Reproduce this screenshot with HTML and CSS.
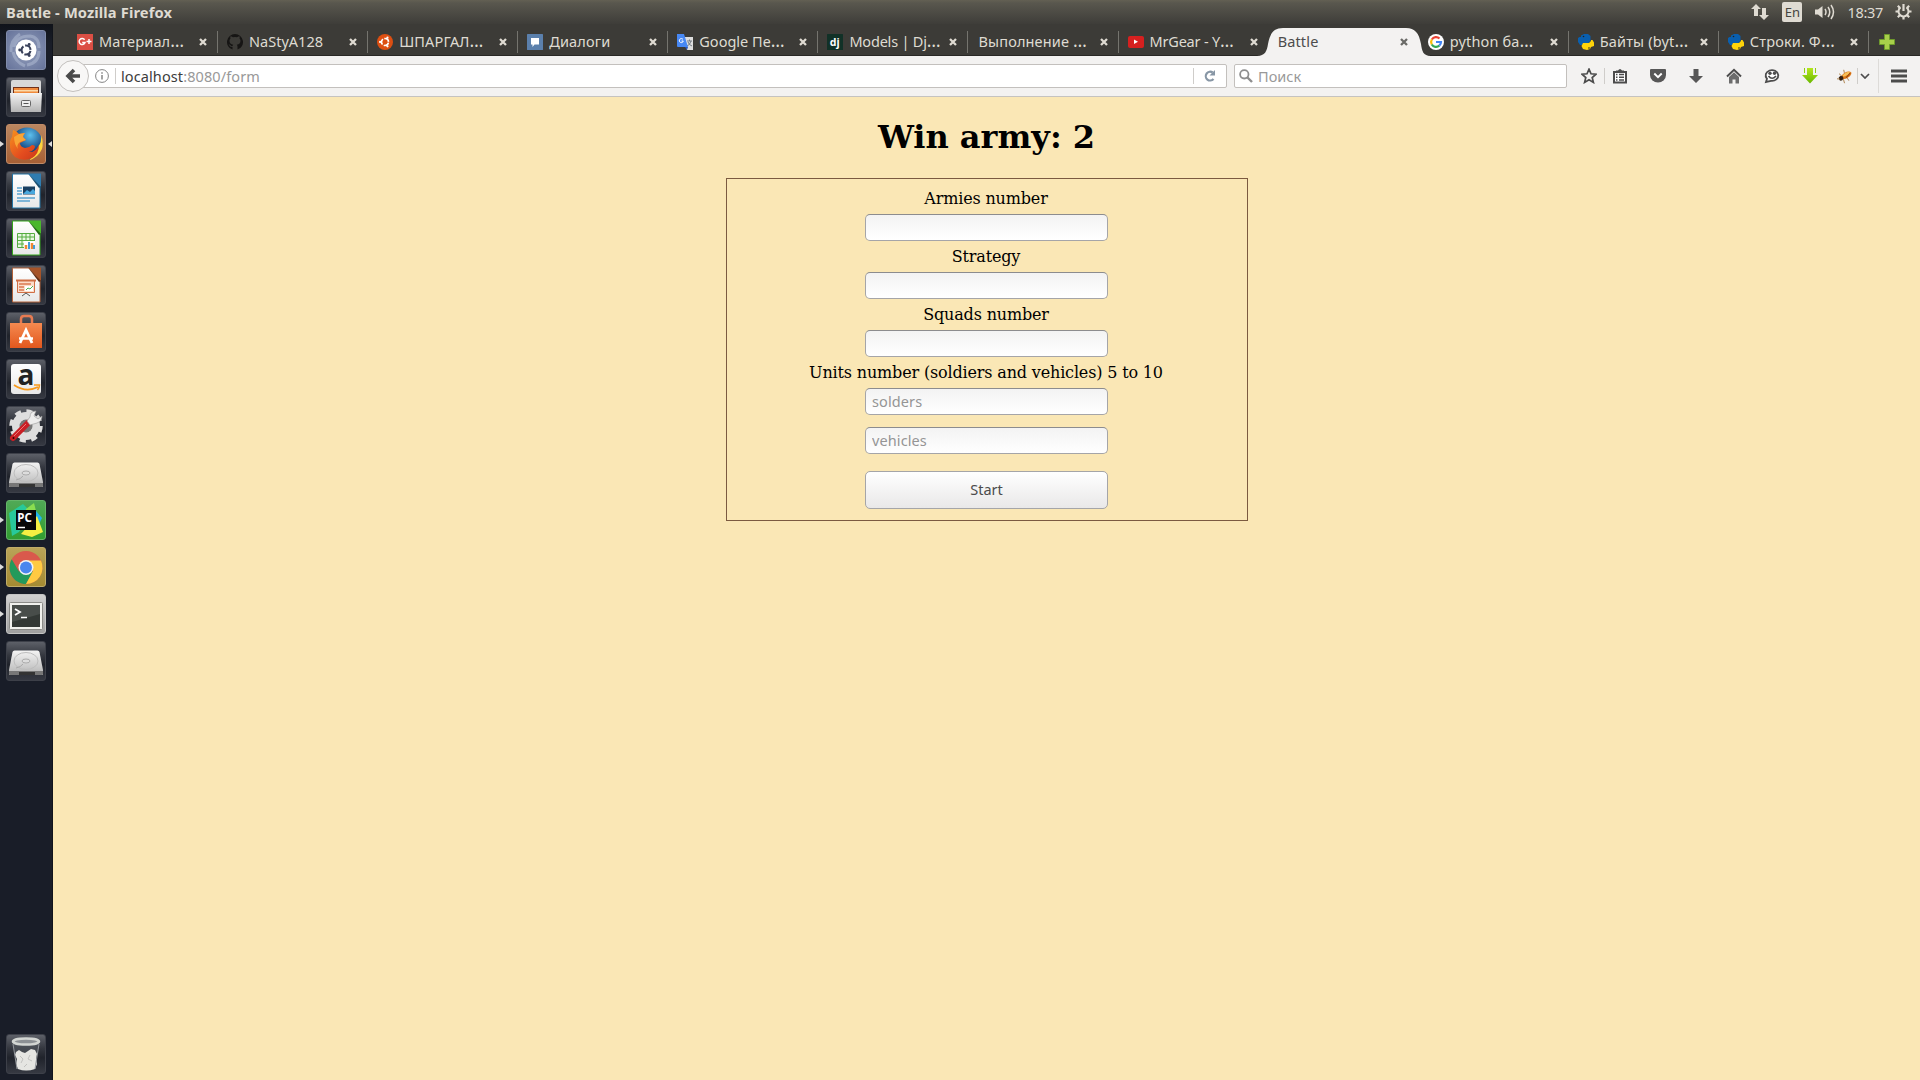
FILE: index.html
```html
<!DOCTYPE html>
<html lang="ru">
<head>
<meta charset="utf-8">
<title>Battle</title>
<link rel="stylesheet" href="styles.css">
</head>
<body>
<svg class="defs" width="0" height="0">
  <defs>
    <linearGradient id="metal" x2="0" y2="1"><stop stop-color="#f4f4f4"/><stop offset="1" stop-color="#b4b4b4"/></linearGradient>
    <linearGradient id="paper" x2="0" y2="1"><stop stop-color="#fff"/><stop offset="1" stop-color="#e8e8e8"/></linearGradient>
    <linearGradient id="bag" x2="0" y2="1"><stop stop-color="#f58a50"/><stop offset="1" stop-color="#e2571d"/></linearGradient>
    <radialGradient id="globe" cx=".6" cy=".25"><stop stop-color="#5cc0ee"/><stop offset="1" stop-color="#14447f"/></radialGradient>
    <linearGradient id="fox" x2="1" y2="1"><stop stop-color="#f7931e"/><stop offset=".6" stop-color="#e44d1f"/><stop offset="1" stop-color="#c93818"/></linearGradient>
    <linearGradient id="green" x2="0" y2="1"><stop stop-color="#b4e61e"/><stop offset="1" stop-color="#69b800"/></linearGradient>
    <symbol id="close" viewBox="0 0 8 8"><path d="M1 1l6 6M7 1L1 7" stroke="currentColor" stroke-width="2.3"/></symbol>
    <symbol id="cof" viewBox="0 0 16 16">
      <circle cx="8" cy="8" r="4" fill="none" stroke="currentColor" stroke-width="1.9" stroke-dasharray="6.8 1.578" stroke-dashoffset="-.8"/>
      <circle cx="2.4" cy="8" r="1.3" fill="currentColor"/><circle cx="10.8" cy="3.1" r="1.3" fill="currentColor"/><circle cx="10.8" cy="12.9" r="1.3" fill="currentColor"/>
    </symbol>
    <symbol id="python" viewBox="0 0 16 16">
      <path d="M3 1.500L6 0h4l2.500 2v5L10.500 9H6L4 11H2L0 8V4l1.500-1H3z" fill="#0a5fae"/>
      <path d="M13 6h1.500L16 8.500V12l-3 1-1 2-3 1-4-1-1.500-3L5 9h6l2-2z" fill="#ffd40a"/>
      <circle cx="5.500" cy="2.500" r=".8" fill="#222"/><circle cx="11" cy="14" r=".8" fill="#222"/>
    </symbol>
    <symbol id="disk" viewBox="0 0 40 40">
      <path d="M8.500 9.500h23q1.500 0 2 1.500L37 29v5H3v-5l3.500-18q.500-1.500 2-1.500z" fill="url(#metal)"/>
      <path d="M3 30h34v3q0 1-1 1H4q-1 0-1-1z" fill="#777"/><path d="M13 31h16v3H13z" fill="#333"/>
      <ellipse cx="20" cy="20" rx="12" ry="8.500" fill="none" stroke="#bdbdbd"/>
      <ellipse cx="20" cy="20" rx="4" ry="2" fill="#ddd" stroke="#aaa"/>
      <path d="M10 27q5-1 7-4" stroke="#aaa" fill="none"/>
    </symbol>
  </defs>
</svg>

<header class="panel">
  <span class="panel-title">Battle - Mozilla Firefox</span>
  <div class="indicators">
    <svg width="18" height="18" viewBox="0 0 18 18"><path d="M5 1L0 6h3v7h4V6h3zM13 17l5-5h-3V5h-4v7H8z" fill="#dfdbd2"/></svg>
    <span class="lang">En</span>
    <svg width="21" height="16" viewBox="0 0 21 16"><path d="M1 5.500h3L8.500 2v12L4 10.500H1z" fill="#dfdbd2"/><path d="M11 5q2 3 0 6M14 3q3.500 5 0 10M17 1q5 7 0 14" fill="none" stroke="#dfdbd2" stroke-width="1.500"/></svg>
    <span class="clock">18:37</span>
    <svg width="17" height="17" viewBox="0 0 17 17"><path d="M5.500 4.400a5 5 0 1 0 6 0" fill="none" stroke="#dfdbd2" stroke-width="2"/><path d="M8.500 1v7M.5 8.500h3M13.500 8.500h3M8.500 13.500v3M2.800 2.800L5 5M14.200 2.800L12 5M2.800 14.200L5 12M14.200 14.200L12 12" stroke="#dfdbd2" stroke-width="2.200"/></svg>
  </div>
</header>

<div class="desktop">
  <nav class="launcher">
    <div class="tile tile-dash"><svg viewBox="0 0 40 40"><g fill="none" stroke="#c4cde2" stroke-opacity=".4" stroke-width="3"><path d="M8 17Q10 6 24 6q9 1 9 12M33 21q0 12-12 14M7 22q2 10 12 14M14 4Q4 10 5 22"/></g><circle cx="20" cy="20" r="10.500" fill="#fff"/><svg x="11" y="11" width="18" height="18" color="#39415a"><use href="#cof"/></svg></svg></div>
    <div class="tile"><svg viewBox="0 0 40 40"><path d="M5 5q0-2 2-2h26q2 0 2 2v11H5z" fill="#d8d8d8"/><path d="M7 10h26v6H7z" fill="#713018"/><path d="M8 11h24v5H8z" fill="#f08a3c"/><path d="M8 13h24v1.500H8z" fill="#fbd9a8"/><path d="M4 16h32l-1 19H5z" fill="url(#metal)"/><rect x="15.500" y="23.500" width="9" height="6" rx="1" fill="#eee" stroke="#666"/><path d="M17.500 26.500h5" stroke="#555"/></svg></div>
    <div class="tile tile-firefox"><i class="pip"></i><i class="pip pip-right"></i><svg viewBox="0 0 40 40"><circle cx="21" cy="19" r="15.500" fill="url(#globe)"/><path d="M35 11q3 7 1 14-4 9-13 11 9-6 9-13 4-5 3-12z" fill="#ffd23c"/><path d="M7 6q4 1 6 4l6-1q-2 2-2 4l3 3-6 3q0 4 5 5 4 0 7-3 3 0 3 2-1 4-6 5 6 1 10-7 0 9-7 13-9 4-17-1Q3 28 4 18q0-3 2-5z" fill="url(#fox)"/><path d="M8 13l5-3 6-1q-2 2-2 4l3 3-6 2q-4 3-2 7-4-5-4-12z" fill="#f9a534"/></svg></div>
    <div class="tile"><svg viewBox="0 0 40 40"><path d="M6.500 3H23l11 12v22H6.500z" fill="url(#paper)" stroke="#2474a4"/><path d="M22 2.500h13V16z" fill="#2f7cb0"/><path d="M22 2.500L35 16l-2 1z" fill="#174d70"/><path d="M17 15.500h12v8H17z" fill="#193f61"/><path d="M17 23l4-4 3 2 3-3 2 2v3z" fill="#49a8de"/><path d="M11 17h5M11 20h5M11 23h5M11 27h18M11 30h13" stroke="#5aa2d0" stroke-width="1.600"/></svg></div>
    <div class="tile"><svg viewBox="0 0 40 40"><path d="M6.500 3H23l11 12v22H6.500z" fill="url(#paper)" stroke="#35a41c"/><path d="M22 2.500h13V16z" fill="#49b72c"/><path d="M22 2.500L35 16l-2 1z" fill="#206a12"/><path d="M11.500 15.500h17v14h-17zM11.500 19h17M11.500 22.500h17M11.500 26h17M16 15.500v14M20 15.500v14M24 15.500v14" fill="#e8f8e2" stroke="#55ac40"/><path d="M18 23h11v8H18z" fill="#fff"/><path d="M20 27v4M26 25v6" stroke="#f08832" stroke-width="2.500"/><path d="M23 24v7M28 27v4" stroke="#459bd8" stroke-width="2"/></svg></div>
    <div class="tile"><svg viewBox="0 0 40 40"><path d="M6.500 3H23l11 12v22H6.500z" fill="url(#paper)" stroke="#b2623a"/><path d="M22 2.500h13V16z" fill="#a65429"/><path d="M22 2.500L35 16l-2 1z" fill="#612c12"/><path d="M11.500 15.500h17v12h-17z" fill="#fbdcc9" stroke="#d06f45"/><path d="M10 15.500h20" stroke="#d06f45" stroke-width="2"/><path d="M13 19h12M13 22h5M13 25h5" stroke="#dc7850" stroke-width="1.500"/><path d="M19 21h8v5h-8z" fill="#fff"/><path d="M20 25l2-2 2 1 3-3" stroke="#4caf50" fill="none"/><path d="M16 31l4-3 4 3" stroke="#555" fill="none"/></svg></div>
    <div class="tile"><svg viewBox="0 0 40 40"><path d="M15 13V7q0-3 3-3h5q3 0 3 3v6" fill="none" stroke="#e77b52" stroke-width="2.500"/><path d="M4 11h32v25H4z" fill="url(#bag)"/><path d="M14 31l6-13 6 13" fill="none" stroke="#fff" stroke-width="2.800"/><path d="M13 26.500h14" stroke="#fff" stroke-width="2.500"/></svg></div>
    <div class="tile"><svg viewBox="0 0 40 40"><rect x="5" y="5" width="30" height="30" rx="3" fill="url(#paper)"/><text x="20" y="25.500" class="amazon-a">a</text><path d="M8 26q12 8 24 2" fill="none" stroke="#f79a1c" stroke-width="1.800"/><path d="M28 26h5.500q0 3-2 5" fill="none" stroke="#f79a1c" stroke-width="1.500"/></svg></div>
    <div class="tile"><svg viewBox="0 0 40 40"><circle cx="20" cy="20" r="10" fill="none" stroke="#dedede" stroke-width="8"/><circle cx="20" cy="20" r="14.500" fill="none" stroke="#dedede" stroke-width="4.500" stroke-dasharray="6 5.388"/><circle cx="20" cy="20" r="6.500" fill="#777"/><path d="M7 32L22 17" stroke="#c91f25" stroke-width="6" stroke-linecap="round"/><path d="M8 30L20 18" stroke="#ef7575" stroke-width="1"/><path d="M21 15l3 4 7-2q5-2 5-7l-4 3-4-3 2-5q-6 0-6 6z" fill="#ededed" stroke="#999" stroke-width=".6"/><circle cx="7.500" cy="32" r="1" fill="#300"/></svg></div>
    <div class="tile"><svg viewBox="0 0 40 40"><use href="#disk"/></svg></div>
    <div class="tile tile-pycharm"><i class="pip"></i><svg viewBox="0 0 40 40"><path d="M3 13L17 4l8 8-12 20-7 4z" fill="#28c99a"/><path d="M20 9l8-6 3 12-15 9z" fill="#8bde50"/><path d="M30 11l6 7-4 8-6-9z" fill="#22b5ec"/><path d="M15 34l16-18 6 16-11 5z" fill="#f5ef42"/><rect x="10" y="10" width="20" height="20" fill="#080808"/><path d="M12 27.500h7" stroke="#fff" stroke-width="1.500"/><text x="11.300" y="21.500" class="pycharm-text">PC</text></svg></div>
    <div class="tile tile-chrome"><i class="pip"></i><svg viewBox="0 0 40 40"><circle cx="20" cy="20.500" r="16.500" fill="#d9594c"/><path d="M5.700 12.300A16.500 16.500 0 0 0 20 37l7-12.500L13 24.500z" fill="#239a5b"/><path d="M20 37A16.500 16.500 0 0 0 35 13.500H20l7 10.500z" fill="#ffca42"/><circle cx="20" cy="20.500" r="7.500" fill="#f4f4f4"/><circle cx="20" cy="20.500" r="6" fill="#4a86ee"/></svg></div>
    <div class="tile tile-terminal"><i class="pip"></i><svg viewBox="0 0 40 40"><rect x="3.500" y="8.500" width="33" height="27" rx="1" fill="#f0f0ed" stroke="#8b8b88"/><rect x="6" y="11" width="28" height="22" fill="#333835"/><path d="M6 11h28v9L6 28z" fill="#484d4a"/><path d="M9 15l5 3-5 3" fill="none" stroke="#fff" stroke-width="1.800"/><path d="M15 23.500h6" stroke="#fff" stroke-width="1.500"/></svg></div>
    <div class="tile"><svg viewBox="0 0 40 40"><use href="#disk"/></svg></div>
    <div class="tile tile-trash"><svg viewBox="0 0 40 40"><path d="M7 9h26l-4 26q-9 3-18 0z" fill="#555a60" opacity=".6"/><path d="M10 18l3-2 3 2 3 1 3-2 3-2 4 1 2 4-1 5 1 5-2 5q-9 3-17 0l-2-5 1-5-2-4z" fill="#e5e5e2"/><path d="M14 22l3 3-2 4M24 21l-2 4 4 2M18 33l3-3" stroke="#b8b8b6" stroke-width=".8" fill="none"/><ellipse cx="20" cy="7.500" rx="13" ry="3" fill="#8c9094" stroke="#d2d5d2" stroke-width="2.500"/><path d="M7 10l4 25M33 10l-4 25" stroke="#92969b"/></svg></div>
  </nav>

  <div class="browser">
    <div class="tabs">
      <div class="tab"><svg class="fav" viewBox="0 0 16 16"><path d="M0 0h16v16H0z" fill="#db4f44"/><path d="M7.600 5.800A3 3 0 1 0 8 8.500H5.200M9.500 7.500h5M12 5v5" fill="none" stroke="#fff" stroke-width="1.500"/></svg><span class="label">Материал<span class="dots">…</span></span><svg class="close"><use href="#close"/></svg></div>
      <div class="tab"><svg class="fav" viewBox="0 0 16 16"><path d="M8 0a8 8 0 0 0-2.500 15.600V13q-2 .4-3-1.500l-1-1q1.500-.3 2.200 1 .8 1 1.900.5.100-.8.600-1.200Q2.500 10.300 2.500 6.800q0-1.300 1-2.200-.4-1 0-2.300 1 0 2.500 1 2-.6 4 0 1.500-1 2.500-1 .4 1.300 0 2.300 1 .9 1 2.200 0 3.500-3.700 4 .7.600.7 1.800v3A8 8 0 0 0 8 0z" fill="#161514"/></svg><span class="label label-tight">NaStyA128</span><svg class="close"><use href="#close"/></svg></div>
      <div class="tab"><svg class="fav" viewBox="0 0 16 16"><circle cx="8" cy="8" r="8" fill="#dd4f12"/><svg x="1" y="1" width="14" height="14" color="#fff"><use href="#cof"/></svg></svg><span class="label">ШПАРГАЛ<span class="dots">…</span></span><svg class="close"><use href="#close"/></svg></div>
      <div class="tab"><svg class="fav" viewBox="0 0 16 16"><rect width="16" height="16" rx=".5" fill="#5b80ac"/><path d="M4 4h8v6.500H7.500L5.500 13v-2.500H4z" fill="#fff"/></svg><span class="label">Диалоги</span><svg class="close"><use href="#close"/></svg></div>
      <div class="tab"><svg class="fav" viewBox="0 0 16 16"><path d="M7 3h9v13H10z" fill="#dedede"/><path d="M10 7h5M12.500 5.500V7M14 7q-1 4-4 5M11 8q1 3 4 4" fill="none" stroke="#737b83"/><path d="M0 0h7l4 13H1q-1 0-1-1z" fill="#4788f4"/><path d="M8 13h3l-1 3z" fill="#2856be"/><path d="M6 5.500A2 2 0 1 0 6.300 7H4.500" fill="none" stroke="#fff"/></svg><span class="label label-tight">Google Пе<span class="dots">…</span></span><svg class="close"><use href="#close"/></svg></div>
      <div class="tab"><svg class="fav" viewBox="0 0 16 16"><rect width="16" height="16" rx=".5" fill="#113127"/><text x="2.800" y="11.800" class="dj">dj</text></svg><span class="label label-tighter">Models | Dj<span class="dots">…</span></span><svg class="close"><use href="#close"/></svg></div>
      <div class="tab"><span class="label">Выполнение <span class="dots">…</span></span><svg class="close"><use href="#close"/></svg></div>
      <div class="tab tab-before"><svg class="fav" viewBox="0 0 16 16"><rect y="2" width="16" height="12" rx="2" fill="#d6201f"/><path d="M6 5.500v4.500l4-2.200z" fill="#fff"/></svg><span class="label label-tighter">MrGear - Y<span class="dots">…</span></span><svg class="close"><use href="#close"/></svg></div>
      <div class="tab tab-active"><svg class="tab-shape" viewBox="0 0 174 29"><path d="M0 29v-1c8 0 10-5 11-12C13 5 17 0 26 0h123c9 0 13 5 15 16 1 7 2 12 10 12v1z" fill="#f3f2f1"/></svg><span class="label">Battle</span><svg class="close"><use href="#close"/></svg></div>
      <div class="tab"><svg class="fav" viewBox="0 0 16 16"><circle cx="8" cy="8" r="8" fill="#fff"/><g fill="none" stroke-width="2.200"><path d="M3.800 5.500A5 5 0 0 1 11.500 4.500" stroke="#ea4335"/><path d="M3.800 5.500a5 5 0 0 0 0 5" stroke="#fbbc05"/><path d="M3.800 10.500a5 5 0 0 0 7.500 1.200" stroke="#34a853"/><path d="M8 8h5a5 5 0 0 1-1.700 3.700" stroke="#4285f4"/></g></svg><span class="label">python ба<span class="dots">…</span></span><svg class="close"><use href="#close"/></svg></div>
      <div class="tab"><svg class="fav"><use href="#python"/></svg><span class="label">Байты (byt<span class="dots">…</span></span><svg class="close"><use href="#close"/></svg></div>
      <div class="tab"><svg class="fav"><use href="#python"/></svg><span class="label">Строки. Ф<span class="dots">…</span></span><svg class="close"><use href="#close"/></svg></div>
      <svg class="new-tab" viewBox="0 0 16 16"><path d="M5.500.5h5v5h5v5h-5v5h-5v-5h-5v-5h5z" fill="#a8cf4a" stroke="#6e9a2c"/></svg>
    </div>

    <div class="toolbar">
      <div class="back"><svg width="16" height="16" viewBox="0 0 16 16"><path d="M9 2L3 8l6 6M4 8h11" fill="none" stroke="#4a4a4a" stroke-width="3.600"/></svg></div>
      <div class="urlbar">
        <svg class="info" viewBox="0 0 14 14"><circle cx="7" cy="7" r="6.400" fill="none" stroke="#858585"/><path d="M7 6v4.500M7 3.300v1.500" stroke="#858585" stroke-width="1.500"/></svg>
        <i class="bar"></i>
        <span class="url">localhost<span class="dim">:8080/form</span></span>
        <i class="bar"></i>
        <svg class="reload" viewBox="0 0 12 12"><path d="M9.500 9A4.400 4.400 0 1 1 8.700 2.500" fill="none" stroke="#8796a5" stroke-width="2.200"/><path d="M11 0v5.500H5.500z" fill="#8796a5"/></svg>
      </div>
      <div class="search"><svg width="14" height="14" viewBox="0 0 14 14"><circle cx="5.300" cy="5.300" r="4.200" fill="none" stroke="#8e8e8e" stroke-width="1.800"/><path d="M8.500 8.500l4.500 4.500" stroke="#8e8e8e" stroke-width="2.400"/></svg><span>Поиск</span></div>
      <div class="tool tool-star"><svg viewBox="0 0 16 16"><path d="M8 1.200l2 4.600 5 .4-3.800 3.300 1.200 4.900L8 11.800l-4.400 2.600 1.200-4.900L1 6.200l5-.4z" fill="none" stroke="#4c4c4c" stroke-width="1.700"/></svg></div>
      <i class="bar"></i>
      <div class="tool tool-list"><svg viewBox="0 0 16 16"><path d="M2 4h12v10.500H2z" fill="#fff" stroke="#4c4c4c" stroke-width="2"/><path d="M4 4V2.500h2Q8-.5 10 2.500h2V4z" fill="#4c4c4c"/><path d="M4 6.500h1.500M4 9.200h1.500M4 12h1.500M7 6.500h5M7 9.200h5M7 12h5" stroke="#4c4c4c" stroke-width="1.500"/></svg></div>
      <div class="tool"><svg viewBox="0 0 16 16"><path d="M1 1h14q1 0 1 1v5a8 7.500 0 0 1-16 0V2q0-1 1-1z" fill="#575757"/><path d="M4.300 5.500L8 9.200l3.700-3.700" fill="none" stroke="#fff" stroke-width="1.900"/></svg></div>
      <div class="tool"><svg viewBox="0 0 16 16"><path d="M5.500 1h5v7H15l-7 7-7-7h4.500z" fill="#575757"/></svg></div>
      <div class="tool"><svg viewBox="0 0 16 16"><path d="M1 8.500L8 1.800l7 6.700" fill="none" stroke="#4c4c4c" stroke-width="2"/><path d="M3 9l5-4.800L13 9v6.500H9.500v-4h-3v4H3z" fill="#6c6c6c"/></svg></div>
      <div class="tool"><svg viewBox="0 0 16 16"><path d="M3 10.800A6.300 5.400 0 1 1 7 12.800L2 14z" fill="#fff" stroke="#4c4c4c" stroke-width="1.800"/><path d="M4.500 8q3.500 4.500 7.500 0" fill="none" stroke="#4c4c4c" stroke-width="1.700"/><circle cx="6" cy="5.200" r="1.700" fill="#4c4c4c"/><circle cx="10.500" cy="5.200" r="1.700" fill="#4c4c4c"/></svg></div>
      <div class="tool"><svg viewBox="0 0 16 16"><path d="M5 0h6v7h5l-8 8.500L0 7h5z" fill="url(#green)"/><path d="M2 0v5h1V0zM13 0v5h1V0z" fill="#8fce10"/></svg></div>
      <div class="tool tool-bug"><svg viewBox="0 0 16 16"><g transform="rotate(-30 8 8)"><ellipse cx="9.500" cy="8" rx="5.600" ry="3" fill="#e07a17"/><ellipse cx="10" cy="7" rx="4" ry="1.300" fill="#f8c158"/><path d="M8 10l6-2" stroke="#8b3f10"/><circle cx="3.500" cy="8" r="2.300" fill="#352213"/><path d="M2 8l-3-2M5 10l-1 4M9 11v3M5 6L4 3M9 5l1-3" stroke="#a87a40" stroke-width=".8"/></g></svg></div>
      <i class="bar"></i>
      <svg class="chevron" viewBox="0 0 10 6"><path d="M1 1l4 4 4-4" fill="none" stroke="#4c4c4c" stroke-width="1.700"/></svg>
      <i class="bar bar-tall"></i>
      <svg class="menu" viewBox="0 0 16 14"><path d="M0 2h16M0 7h16M0 12h16" stroke="#4c4c4c" stroke-width="2.800"/></svg>
    </div>

    <main class="page">
      <h1>Win army: 2</h1>
      <form class="form">
        <label for="armies">Armies number</label>
        <input id="armies" type="text">
        <label for="strategy">Strategy</label>
        <input id="strategy" type="text">
        <label for="squads">Squads number</label>
        <input id="squads" type="text">
        <label for="solders">Units number (soldiers and vehicles) 5 to 10</label>
        <input id="solders" type="text" placeholder="solders">
        <input class="vehicles" type="text" placeholder="vehicles">
        <button type="button">Start</button>
      </form>
    </main>
  </div>
</div>
</body>
</html>
```
FILE: styles.css
```css
* { box-sizing: border-box; }
body {
  margin: 0;
  height: 1080px;
  overflow: hidden;
  display: flex;
  flex-direction: column;
  font: 14.5px/20px "Noto Sans", sans-serif;
}
svg { display: block; flex: none; }
.defs { position: absolute; }

/* Top panel */
.panel {
  height: 24px;
  flex: none;
  display: flex;
  align-items: center;
  justify-content: space-between;
  padding: 0 8px 1px 6px;
  background: linear-gradient(#636053 0, #59574e 3px, #3e3d39 100%);
  color: #dfdbd2;
}
.panel-title { font-weight: 700; font-size: 14.7px; letter-spacing: .12px; }
.indicators { display: flex; align-items: center; }
.lang {
  width: 20px;
  height: 20px;
  margin: 0 12px 0 13px;
  border-radius: 2px;
  background: #dfdbd2;
  color: #45443f;
  font-size: 13px;
  text-align: center;
}
.clock { margin: 0 12px; letter-spacing: -.3px; }

/* Launcher */
.desktop { flex: 1; display: flex; min-height: 0; }
.launcher {
  width: 53px;
  flex: none;
  display: flex;
  flex-direction: column;
  gap: 7px;
  padding: 6px 7px 6px 6px;
  background: linear-gradient(#10131a, #191d28 20px);
  border-right: 1px solid #11141b;
}
.tile {
  position: relative;
  width: 40px;
  height: 40px;
  flex: none;
  border: 1px solid #3d4049;
  border-radius: 3px;
  background: linear-gradient(#5d6068, #34373f 35%, #20232b 60%, #363942);
}
.tile > svg { width: 40px; height: 40px; margin: -1px; overflow: visible; }
.tile-dash { background: radial-gradient(#94a0bd, #66739a); border-color: #818cab; }
.tile-firefox { background: linear-gradient(#b98660, #a76035); border-color: #c08a66; }
.tile-pycharm { background: linear-gradient(#50a956, #319d31); border-color: #66b569; }
.tile-chrome { background: linear-gradient(#b9a358, #a58b32); border-color: #c0ac68; }
.tile-terminal { background: linear-gradient(#d0d0d0, #a0a0a0); border-color: #c4c4c4; }
.tile-trash { margin-top: auto; }
.pip {
  position: absolute;
  left: -7px;
  top: 16px;
  border: 3px solid transparent;
  border-left: 4px solid #dcdcdc;
  border-right: 0;
}
.pip-right { left: auto; right: -7px; border-right: 4px solid #dcdcdc; border-left: 0; }
.amazon-a { font: 700 28px "Open Sans", sans-serif; text-anchor: middle; fill: #222; }
.pycharm-text { font: 700 11.500px "Noto Sans", sans-serif; fill: #fff; }
.dj { font: 700 10.500px "Noto Sans", sans-serif; fill: #fff; }

/* Tabs */
.browser { flex: 1; min-width: 0; display: flex; flex-direction: column; }
.tabs {
  height: 32px;
  flex: none;
  display: flex;
  padding-left: 15px;
  background: #3c3b37;
  border-bottom: 1px solid #292825;
  color: #dfdbd2;
}
.tab {
  position: relative;
  width: 150.090px;
  flex: none;
  display: flex;
  align-items: center;
  padding: 4px 11px 0 9px;
}
.tab::after { content: ""; position: absolute; right: 0; top: 7px; width: 1px; height: 22px; background: #75746e; }
.tab-before::after, .tab-active::after { content: none; }
.fav { width: 16px; height: 16px; margin-right: 6px; }
.label { flex: 1; min-width: 0; white-space: nowrap; letter-spacing: .15px; padding-bottom: 1px; }
.label-tight { letter-spacing: 0; }
.label-tighter { letter-spacing: -.2px; }
.dots { font-size: 17.500px; line-height: 0; }
.tab > .label:first-child { margin-left: 1px; }
.close { width: 8px; height: 8px; color: #dfdbd2; }
.tab-active { color: #4c4c4c; z-index: 1; }
.tab-active .close, .tab-active .label { position: relative; }
.tab-active .close { color: #6a6a67; }
.tab-shape { position: absolute; left: -12px; top: 4px; width: 174px; height: 29px; }
.new-tab { width: 16px; height: 16px; margin: 10px 0 0 10px; }

/* Navigation toolbar */
.toolbar {
  height: 41px;
  flex: none;
  display: flex;
  align-items: center;
  padding-left: 4px;
  background: #f3f2f1;
  border-bottom: 1px solid #c5c3c0;
  color: #3c3c3c;
}
.back {
  width: 32px;
  height: 32px;
  flex: none;
  display: grid;
  place-items: center;
  border: 1px solid #c3c0bd;
  border-radius: 50%;
  background: #f8f7f6;
  z-index: 1;
}
.urlbar, .search {
  height: 24px;
  display: flex;
  align-items: center;
  border: 1px solid #c3c0bd;
  background: #fff;
  border-radius: 2px;
}
.urlbar { width: 1146px; margin-left: -8px; padding-left: 13px; }
.info { width: 14px; height: 14px; margin-right: 6px; }
.bar { width: 1px; height: 16px; background: #cfcdca; flex: none; }
.url { flex: 1; margin-left: 5px; letter-spacing: .1px; }
.dim { color: #999; }
.reload { width: 12px; height: 12px; margin: 0 10px; }
.search { width: 333px; margin-left: 7px; padding-left: 4px; color: #999; gap: 5px; }
.tool { width: 38px; display: grid; place-items: center; }
.tool svg { width: 16px; height: 16px; }
.tool-star { width: 37px; padding-left: 6px; }
.tool-list { width: 34px; padding-right: 5px; }
.tool-bug { width: 28px; padding-left: 4px; }
.chevron { width: 10px; height: 6px; margin: 0 8px 0 2px; }
.bar-tall { height: 34px; background: #dddbd8; }
.menu { width: 16px; height: 14px; margin-left: 12px; }

/* Page */
.page {
  flex: 1;
  background: #fae7b5;
  color: #000;
  font: 16px/19px "DejaVu Serif", serif;
}
h1 { margin: 22px 0; font-size: 32px; line-height: 37px; text-align: center; }
.form {
  width: 522px;
  height: 343px;
  margin: 0 auto;
  display: flex;
  flex-direction: column;
  align-items: center;
  padding-top: 4px;
  border: 1px solid #7b5a40;
}
label { line-height: 31px; letter-spacing: -.16px; padding-right: 1px; }
input, button {
  width: 243px;
  border: 1px solid #a5a5a8;
  border-radius: 5px;
  font: 14.500px/20px "Noto Sans", sans-serif;
}
input {
  height: 27px;
  padding: 0 6px 2px;
  border-top-color: #8c8c8e;
  background: linear-gradient(#f3f3f3, #fff);
  letter-spacing: .1px;
}
input::placeholder { color: #959595; }
.vehicles { margin-top: 12px; }
button {
  height: 38px;
  margin-top: 17px;
  padding: 0 0 2px;
  color: #4c4c4c;
  background: linear-gradient(#fff, #e9e8e8);
}
```
